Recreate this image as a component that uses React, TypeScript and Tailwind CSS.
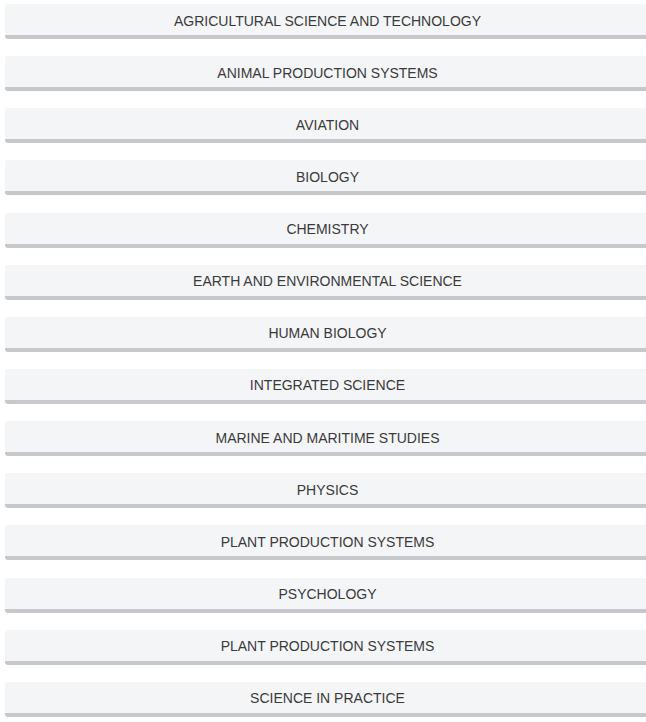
const subjects = [
  'AGRICULTURAL SCIENCE AND TECHNOLOGY',
  'ANIMAL PRODUCTION SYSTEMS',
  'AVIATION',
  'BIOLOGY',
  'CHEMISTRY',
  'EARTH AND ENVIRONMENTAL SCIENCE',
  'HUMAN BIOLOGY',
  'INTEGRATED SCIENCE',
  'MARINE AND MARITIME STUDIES',
  'PHYSICS',
  'PLANT PRODUCTION SYSTEMS',
  'PSYCHOLOGY',
  'PLANT PRODUCTION SYSTEMS',
  'SCIENCE IN PRACTICE',
];

export default function App() {
  return (
    <div className="w-[646px] overflow-hidden bg-white pt-[4px] font-['Liberation_Sans',Arial,sans-serif]">
      <div className="flex flex-col gap-[17.15px]">
        {subjects.map((s, i) => (
          <button
            key={`${s}-${i}`}
            className="ml-[5px] h-[35px] w-[645px] shrink-0 rounded-[3px] border-b-4 border-[#c6c8cb] bg-[#f4f5f7] pt-[3px] text-center text-[14px] text-[#3a3a3a]"
          >
            {s}
          </button>
        ))}
      </div>
    </div>
  );
}
